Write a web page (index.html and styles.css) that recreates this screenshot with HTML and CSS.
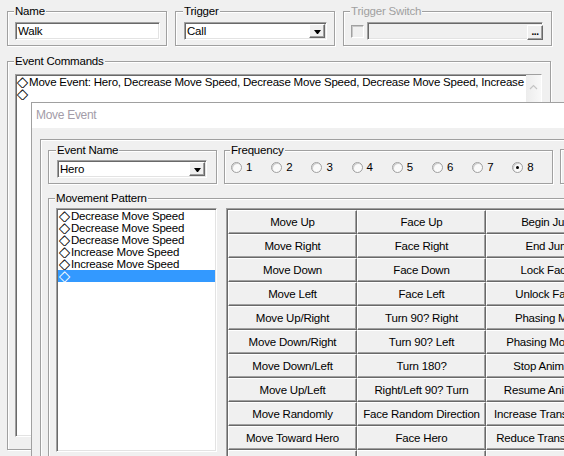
FILE: index.html
```html
<!DOCTYPE html>
<html lang="en">
<head>
  <meta charset="UTF-8">
  <title>Event Editor</title>
  <link rel="stylesheet" href="styles.css">
</head>
<body>
<div class="window">
  <div class="top-row">
    <fieldset class="group name-group">
      <legend>Name</legend>
      <div class="textbox name-box">Walk</div>
    </fieldset>
    <fieldset class="group trigger-group">
      <legend>Trigger</legend>
      <div class="combo trigger-combo">
        <span class="combo-text">Call</span>
        <span class="drop-btn"><span class="arrow"></span></span>
      </div>
    </fieldset>
    <fieldset class="group switch-group">
      <legend class="disabled">Trigger Switch</legend>
      <div class="switch-row">
        <span class="checkbox"></span>
        <div class="textbox switch-box"><span class="dots-btn">...</span></div>
      </div>
    </fieldset>
  </div>

  <fieldset class="group commands-group">
    <legend>Event Commands</legend>
    <div class="listbox commands-list">
      <div class="list-items">
        <div class="item"><span class="dia">◇</span>Move Event: Hero, Decrease Move Speed, Decrease Move Speed, Decrease Move Speed, Increase Move Speed, Increase Move Speed</div>
        <div class="item"><span class="dia">◇</span></div>
      </div>
      <div class="vscroll">
        <svg width="9" height="6" viewBox="0 0 9 6"><polyline points="1,5 4.5,1.5 8,5" fill="none" stroke="#c4c4c4" stroke-width="1.2"/></svg>
      </div>
    </div>
  </fieldset>
</div>

<div class="dialog">
  <div class="titlebar">Move Event</div>
  <div class="dialog-body">
    <div class="panel">
      <div class="panel-row">
        <fieldset class="group evname-group">
          <legend>Event Name</legend>
          <div class="combo evname-combo">
            <span class="combo-text">Hero</span>
            <span class="drop-btn"><span class="arrow"></span></span>
          </div>
        </fieldset>
        <fieldset class="group freq-group">
          <legend>Frequency</legend>
          <div class="radios">
            <label class="radio-item"><span class="radio"></span>1</label>
            <label class="radio-item"><span class="radio"></span>2</label>
            <label class="radio-item"><span class="radio"></span>3</label>
            <label class="radio-item"><span class="radio"></span>4</label>
            <label class="radio-item"><span class="radio"></span>5</label>
            <label class="radio-item"><span class="radio"></span>6</label>
            <label class="radio-item"><span class="radio"></span>7</label>
            <label class="radio-item"><span class="radio checked"></span>8</label>
          </div>
        </fieldset>
        <div class="group options-group"></div>
      </div>

      <fieldset class="group pattern-group">
        <legend>Movement Pattern</legend>
        <div class="pattern-row">
          <div class="listbox pattern-list">
            <div class="item"><span class="dia">◇</span>Decrease Move Speed</div>
            <div class="item"><span class="dia">◇</span>Decrease Move Speed</div>
            <div class="item"><span class="dia">◇</span>Decrease Move Speed</div>
            <div class="item"><span class="dia">◇</span>Increase Move Speed</div>
            <div class="item"><span class="dia">◇</span>Increase Move Speed</div>
            <div class="item selected"><span class="dia">◇</span></div>
          </div>
          <div class="cmd-grid">
            <div class="cmd">Move Up</div><div class="cmd">Face Up</div><div class="cmd">Begin Jump</div>
            <div class="cmd">Move Right</div><div class="cmd">Face Right</div><div class="cmd">End Jump</div>
            <div class="cmd">Move Down</div><div class="cmd">Face Down</div><div class="cmd">Lock Facing</div>
            <div class="cmd">Move Left</div><div class="cmd">Face Left</div><div class="cmd">Unlock Facing</div>
            <div class="cmd">Move Up/Right</div><div class="cmd">Turn 90? Right</div><div class="cmd">Phasing Mode</div>
            <div class="cmd">Move Down/Right</div><div class="cmd">Turn 90? Left</div><div class="cmd">Phasing Mode Off</div>
            <div class="cmd">Move Down/Left</div><div class="cmd">Turn 180?</div><div class="cmd">Stop Animation</div>
            <div class="cmd">Move Up/Left</div><div class="cmd">Right/Left 90? Turn</div><div class="cmd">Resume Animation</div>
            <div class="cmd">Move Randomly</div><div class="cmd">Face Random Direction</div><div class="cmd">Increase Transparency</div>
            <div class="cmd">Move Toward Hero</div><div class="cmd">Face Hero</div><div class="cmd">Reduce Transparency</div>
            <div class="cmd"></div><div class="cmd"></div><div class="cmd"></div>
          </div>
        </div>
      </fieldset>
    </div>
  </div>
</div>
</body>
</html>
```

FILE: styles.css
```css
html, body {
  margin: 0;
  padding: 0;
}
body {
  position: relative;
  width: 564px;
  height: 456px;
  overflow: hidden;
  background: #f0f0f0;
  font-family: "Liberation Sans", Arial, sans-serif;
  font-size: 11.5px;
  letter-spacing: -0.2px;
  color: #000;
}
.window {
  padding: 5px 0 0 7px;
}
.top-row {
  display: flex;
  gap: 8px;
}

/* etched group boxes */
.group {
  box-sizing: border-box;
  margin: 0;
  min-width: 0;
  border: 1px solid #a0a0a0;
  box-shadow: inset 1px 1px 0 #fff, 1px 1px 0 #fff;
}
.group legend {
  margin-left: -1px;
  padding: 0 1px;
  line-height: 12px;
  background: #f0f0f0;
}
.group legend.disabled {
  color: #a0a0a0;
}

/* sunken fields */
.textbox, .combo, .listbox {
  box-sizing: border-box;
  border: 1px solid;
  border-color: #a0a0a0 #fff #fff #a0a0a0;
  box-shadow: inset 1px 1px 0 #696969, inset -1px -1px 0 #e3e3e3;
  background: #fff;
}
.textbox {
  height: 18px;
  line-height: 16px;
  padding-left: 2px;
}
.combo {
  display: flex;
  align-items: center;
  height: 18px;
  padding: 1px 1px 1px 2px;
}
.combo-text {
  flex: 1;
  line-height: 14px;
}
.drop-btn, .dots-btn, .cmd {
  box-sizing: border-box;
  border: 1px solid;
  border-color: #fff #696969 #696969 #fff;
  box-shadow: inset -1px -1px 0 #a0a0a0;
  background: #f0f0f0;
}
.drop-btn {
  display: flex;
  align-items: center;
  justify-content: center;
  width: 16px;
  height: 14px;
}
.arrow {
  width: 1px;
  height: 0;
  margin-top: 1px;
  border-left: 3px solid transparent;
  border-right: 3px solid transparent;
  border-top: 4px solid #000;
}

.name-group {
  width: 160px;
  padding: 5px 0 5px 7px;
}
.name-box {
  width: 145px;
}
.trigger-group {
  width: 160px;
  padding: 5px 0 5px 8px;
}
.trigger-combo {
  width: 143px;
}
.switch-group {
  width: 209px;
  padding: 5px 0 5px 7px;
}
.switch-row {
  display: flex;
  align-items: center;
  gap: 3px;
  height: 18px;
}
.checkbox {
  box-sizing: border-box;
  width: 13px;
  height: 13px;
  border: 1px solid;
  border-color: #a0a0a0 #fff #fff #a0a0a0;
  box-shadow: inset 1px 1px 0 #c8c8c8;
  background: #f0f0f0;
}
.switch-box {
  display: flex;
  justify-content: flex-end;
  align-items: flex-end;
  width: 176px;
  background: #f0f0f0;
  padding: 0;
}
.dots-btn {
  width: 16px;
  height: 15px;
  margin: 0 -1px -1px 0;
  font-size: 10px;
  line-height: 12px;
  font-weight: bold;
  letter-spacing: -0.5px;
  text-align: center;
}

.commands-group {
  width: 544px;
  margin-top: 9px;
  padding: 7px 8px 12px 7px;
}
.commands-list {
  display: flex;
  height: 363px;
}
.list-items {
  flex: 1;
  min-width: 0;
  padding-top: 1px;
  overflow: hidden;
}
.item {
  height: 12px;
  line-height: 12px;
  white-space: nowrap;
  overflow: hidden;
}
.dia {
  display: inline-block;
  width: 13px;
  font-family: "DejaVu Sans", sans-serif;
  font-size: 15px;
  line-height: 12px;
  letter-spacing: 0;
  text-align: center;
  vertical-align: top;
}
.vscroll {
  display: flex;
  justify-content: center;
  width: 15px;
  padding-top: 9px;
  box-sizing: border-box;
  background: linear-gradient(to right, #ececec, #f8f8f8);
}

/* Move Event dialog */
.dialog {
  position: absolute;
  left: 31px;
  top: 102px;
  width: 580px;
  height: 380px;
  border: 1px solid #a0a0a0;
  background: #f0f0f0;
}
.titlebar {
  height: 25px;
  line-height: 25px;
  padding-left: 4px;
  background: #fff;
  color: #a39ca8;
  font-size: 12px;
  letter-spacing: -0.3px;
}
.dialog-body {
  padding: 11px 0 0 8px;
}
.panel {
  height: 400px;
  padding: 4px 0 0 7px;
  border: 1px solid #a0a0a0;
  box-shadow: inset 1px 1px 0 #fff;
}
.panel-row {
  display: flex;
  align-items: flex-start;
  gap: 7px;
}
.evname-group {
  width: 169px;
  flex: none;
  padding: 4px 0 5px 8px;
}
.evname-combo {
  width: 150px;
}
.freq-group {
  width: 329px;
  flex: none;
  padding: 2px 0 7px 6px;
}
.options-group {
  width: 200px;
  height: 35px;
  flex: none;
  margin-top: 5px;
}
.radios {
  display: flex;
  height: 18px;
}
.radio-item {
  display: flex;
  align-items: center;
  gap: 4px;
  width: 40.2px;
  flex: none;
}
.radio {
  box-sizing: border-box;
  position: relative;
  width: 11px;
  height: 11px;
  border-radius: 50%;
  border: 1px solid #a0a0a0;
  box-shadow: inset 1px 1px 0 #d0d0d0;
  background: #fafafa;
}
.radio.checked::after {
  content: "";
  position: absolute;
  left: 3px;
  top: 3px;
  width: 3px;
  height: 3px;
  border-radius: 50%;
  background: #000;
}

.pattern-group {
  width: 620px;
  margin-top: 8px;
  padding: 4px 0 0 7px;
}
.pattern-row {
  display: flex;
  align-items: flex-start;
  gap: 9px;
}
.pattern-list {
  width: 161px;
  height: 244px;
  flex: none;
  padding: 1px 1px 0 1px;
}
.item.selected {
  background: #3399ff;
  color: #fff;
}
.cmd-grid {
  display: grid;
  grid-template-columns: repeat(3, 129px);
  grid-auto-rows: 24px;
  padding: 1px 0 0 1px;
  border-top: 1px solid #a0a0a0;
  border-left: 1px solid #a0a0a0;
  box-shadow: inset 1px 1px 0 #696969;
}
.cmd {
  line-height: 22px;
  text-align: center;
  white-space: nowrap;
  overflow: hidden;
}
```
